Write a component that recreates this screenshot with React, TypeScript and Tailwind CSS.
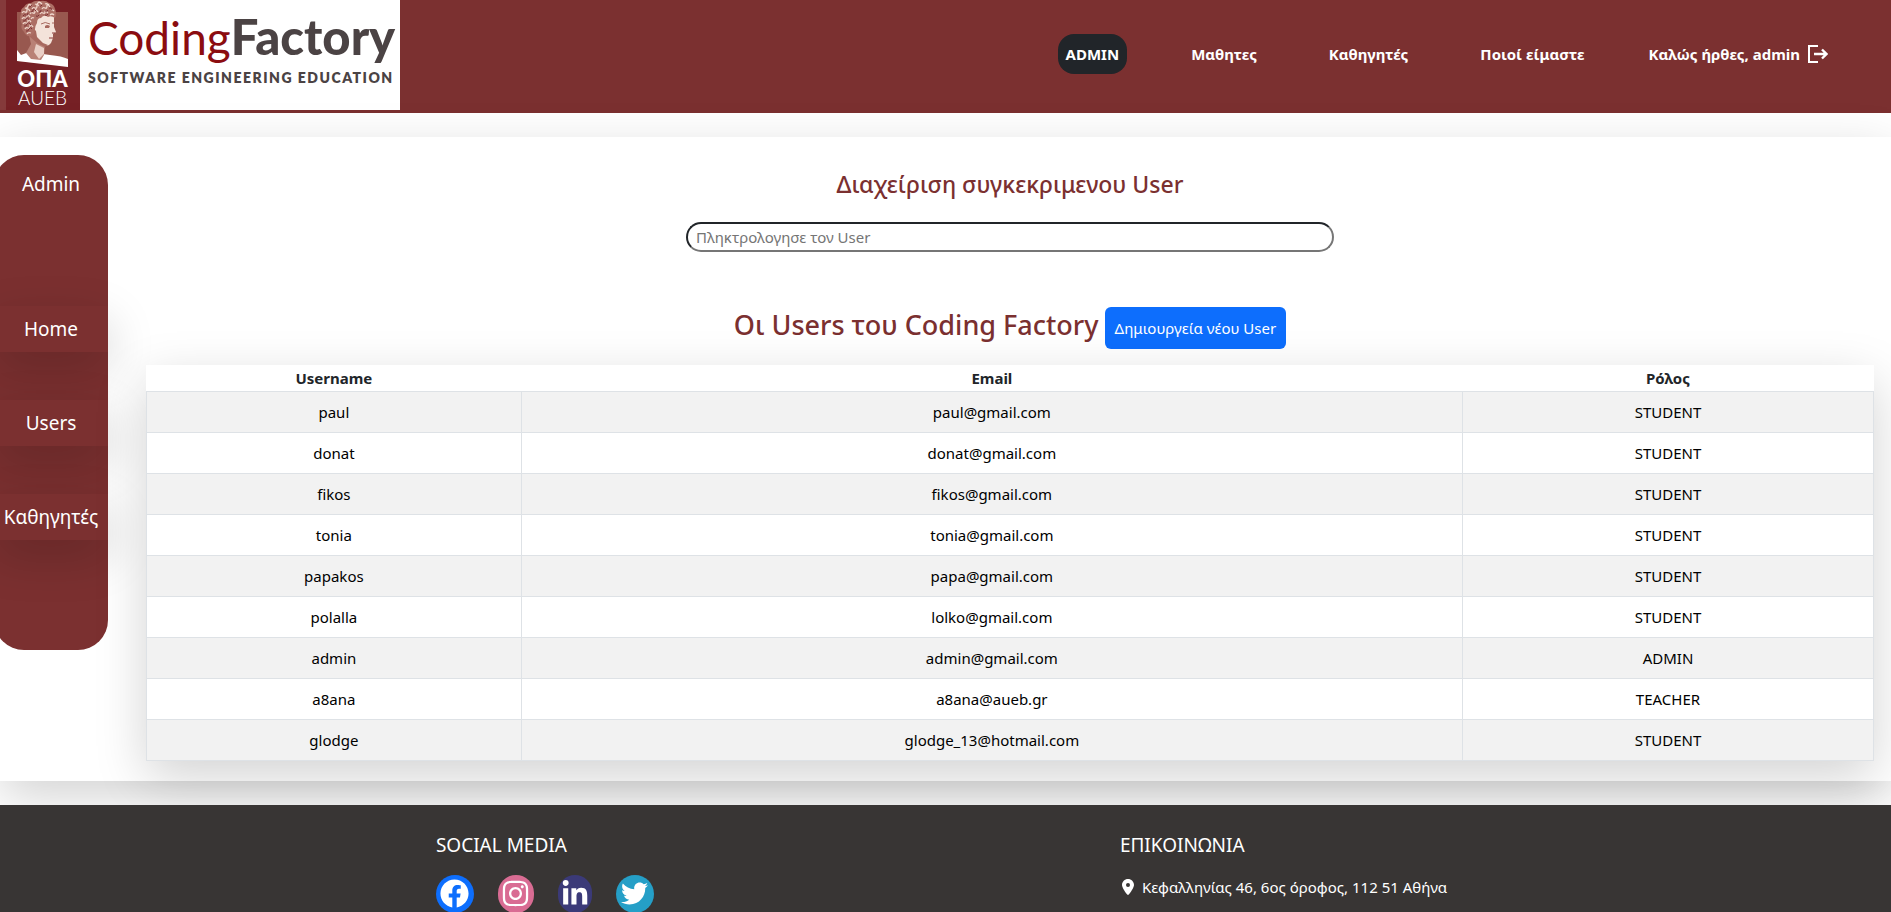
import type { ReactNode } from 'react';
import { FaFacebook, FaInstagram, FaLinkedinIn, FaTwitter } from 'react-icons/fa';
import { FaLocationDot } from 'react-icons/fa6';

type User = { username: string; email: string; role: string };

const users: User[] = [
  { username: 'paul', email: 'paul@gmail.com', role: 'STUDENT' },
  { username: 'donat', email: 'donat@gmail.com', role: 'STUDENT' },
  { username: 'fikos', email: 'fikos@gmail.com', role: 'STUDENT' },
  { username: 'tonia', email: 'tonia@gmail.com', role: 'STUDENT' },
  { username: 'papakos', email: 'papa@gmail.com', role: 'STUDENT' },
  { username: 'polalla', email: 'lolko@gmail.com', role: 'STUDENT' },
  { username: 'admin', email: 'admin@gmail.com', role: 'ADMIN' },
  { username: 'a8ana', email: 'a8ana@aueb.gr', role: 'TEACHER' },
  { username: 'glodge', email: 'glodge_13@hotmail.com', role: 'STUDENT' },
];

function Bust() {
  return (
    <svg viewBox="0 0 52 67" className="block h-[67px] w-[52px]" aria-hidden="true">
      <path d="M0 12H51V66L0 61Z" fill="#98584f" />
      <path d="M0 50L4 55L12 52L26 54L33 55Q45 56 51 59V67L0 61Z" fill="#fff" />
      <path d="M12 35L14 44L9 53L14 59L24 60L27 55L28 46L20 38Z" fill="#b98176" />
      <path d="M19 44L27 48L27 54L22 59L17 52Z" fill="#e9cfc6" />
      <path d="M17 20Q20 15 29 15L37 16L37 23L37 27L39 32L36 34L36 38L34 43Q32 46 29 46L20 41L13 36L12 28Z" fill="#f4e3da" />
      <path d="M15 27L19 31L20 37L26 43L31 45L28 47L20 43L12 36L11 30Z" fill="#a8695f" />
      <path d="M28 26Q30 24 33 26L32 28L28 28Z" fill="#a8695f" />
      <path d="M24 24Q28 21 33 24M35 23L37 23" fill="none" stroke="#a8695f" strokeWidth="1" />
      <path d="M32 38H36M35 33H38" fill="none" stroke="#8a3a38" strokeWidth="1" />
      <path
        d="M4 14Q3 9 7 7Q9 3 14 3Q18 0 23 1Q29 0 32 3Q37 4 38 9Q40 13 38 18Q34 15 31 17Q27 14 24 18Q20 18 20 23Q18 26 18 29Q18 34 14 36Q9 37 7 32Q3 28 5 24Q2 19 4 14Z"
        fill="#ad6f65"
      />
      <path
        d="M5 13q1-2 3-1t2-2t3 1M15 9q1-2 3-1t2-2t3 1M25 9q1-2 3-1t2-2t3 1M34 10q1-1 3 1M8 8q2 1 3-2t4 0M18 4q2 1 3-1t4 1M28 4q2-1 4 1M13 14q1-2 3-1t2-2t3 1M23 14q1-2 3-1t2-1t3 1M33 15q2-2 4 0M5 19q1-2 3-1t2-2t3 1M14 19q1-2 3-1M6 24q1-2 3-1t2-2t3 1M8 29q1-2 3-1t2-2t3 1M10 34q1-2 4-1"
        fill="none"
        stroke="#f0d8ce"
        strokeWidth="1.3"
      />
      <path
        d="M6 16q1-2 3-1t2-2M14 12q2 0 2-2t3 1M22 12q2 1 2-2M28 11q2 1 3-1M12 7q2 0 3-2M22 6q2 1 3-1M32 8q2-1 3 2M19 16q2 1 3-1M28 15q2 1 3-1M6 21q2 1 3-2t3 1M7 26q2 1 3-2t4 1M9 31q2 1 3-2t3 0"
        fill="none"
        stroke="#7c2f32"
        strokeWidth="1"
      />
    </svg>
  );
}

function Logo() {
  return (
    <a href="#home" className="flex h-[110px] w-[400px] shrink-0 bg-white">
      <span className="flex w-20 shrink-0 flex-col items-center border-l-6 border-[#853a3b] bg-[#762025] pr-px text-white">
        <Bust />
        <span className="mt-0.5 font-['Lato'] text-[22px] leading-5 font-black">ΟΠΑ</span>
        <span className="font-['Lato'] text-[19px] leading-[18px] font-light">AUEB</span>
      </span>
      <span className="flex flex-col pt-[7px] pl-2 font-['Lato'] whitespace-nowrap text-[#4b4344]">
        <span className="text-[49px] leading-[58px] font-black">
          <span className="text-[46px] font-normal text-[#8b0c10]">Coding</span>Factory
        </span>
        <span className="text-[14px] leading-[22px] font-extrabold tracking-[1.5px]">SOFTWARE ENGINEERING EDUCATION</span>
      </span>
    </a>
  );
}

function NavLink({ children }: { children: ReactNode }) {
  return (
    <a href="#nav" className="px-2 py-2">
      {children}
    </a>
  );
}

function ExitIcon() {
  return (
    <svg viewBox="0 0 20 18" className="h-[18px] w-5" fill="none" stroke="currentColor" strokeWidth="2" aria-hidden="true">
      <path d="M10 1H1V17H10" />
      <path d="M6 9H18M14 4.5L18.5 9L14 13.5" strokeWidth="2.4" />
    </svg>
  );
}

function SideLink({ children }: { children: ReactNode }) {
  return (
    <a
      href="#side"
      className="block bg-[#7b3030] py-2 text-center leading-[30px] shadow-[0_16px_48px_rgba(0,0,0,0.175)]"
    >
      {children}
    </a>
  );
}

function Social({ label, className, children }: { label: string; className: string; children: ReactNode }) {
  return (
    <a href="#social" aria-label={label} className={`flex h-[38px] items-center justify-center rounded-full text-white ${className}`}>
      {children}
    </a>
  );
}

export default function App() {
  return (
    <div className="flex min-h-screen flex-col bg-white font-['Noto_Sans',sans-serif] text-[15px] leading-6 text-[#212529]">
      <header className="flex h-[113px] items-start justify-between bg-[#7b3030]">
        <Logo />
        <nav className="flex items-center gap-12 self-stretch pr-[55px] pb-1.5 font-bold text-white">
          <div className="flex items-center gap-14">
            <a href="#admin" className="rounded-2xl bg-[#212529] px-2 py-2">
              ADMIN
            </a>
            <NavLink>Μαθητες</NavLink>
            <NavLink>Καθηγητές</NavLink>
            <NavLink>Ποιοί είμαστε</NavLink>
          </div>
          <a href="#logout" className="flex items-center gap-2 px-2 py-2">
            Καλώς ήρθες, admin
            <ExitIcon />
          </a>
        </nav>
      </header>

      <main className="my-6 flex items-start bg-white pr-[17px] shadow-[0_16px_48px_rgba(0,0,0,0.175)]">
        <aside className="mt-[18px] -ml-1.5 w-[114px] shrink-0 rounded-[30px] bg-[#7b3030] pt-3.5 pb-[110px] text-[19px] text-white">
          <h2 className="mb-[107px] text-center leading-[30px]">Admin</h2>
          <nav className="flex flex-col gap-12">
            <SideLink>Home</SideLink>
            <SideLink>Users</SideLink>
            <SideLink>Καθηγητές</SideLink>
          </nav>
        </aside>

        <section className="ml-[38px] flex min-w-0 grow flex-col items-center pt-[31px] pb-5">
          <label htmlFor="user-search" className="text-[23px] leading-8 font-medium text-[#7b3030]">
            Διαχείριση συγκεκριμενου User
          </label>
          <input
            id="user-search"
            type="text"
            placeholder="Πληκτρολογησε τον User"
            className="mt-[22px] h-[30px] w-3/8 rounded-2xl border-2 border-t-[#212529] border-r-[#767676] border-b-[#767676] border-l-[#212529] bg-white px-2 placeholder:text-[#757575]"
          />
          <div className="mt-[55px] flex items-start gap-1.5">
            <h1 className="text-[27px] leading-9 font-medium text-[#7b3030]">Οι Users του Coding Factory</h1>
            <button type="button" className="rounded-md bg-[#0d6efd] px-2.5 py-[9px] text-white">
              Δημιουργεία νέου User
            </button>
          </div>
          <table className="mt-4 w-full table-fixed border-collapse bg-white text-center shadow-[0_16px_48px_rgba(0,0,0,0.175)]">
            <colgroup>
              <col className="w-[21.7%]" />
              <col className="w-[54.5%]" />
              <col className="w-[23.8%]" />
            </colgroup>
            <thead>
              <tr className="h-[26px]">
                <th className="font-bold">Username</th>
                <th className="font-bold">Email</th>
                <th className="font-bold">Ρόλος</th>
              </tr>
            </thead>
            <tbody className="text-black">
              {users.map((u) => (
                <tr key={u.username} className="odd:bg-[#f2f2f2]">
                  <td className="border border-[#dee2e6] p-2">{u.username}</td>
                  <td className="border border-[#dee2e6] p-2">{u.email}</td>
                  <td className="border border-[#dee2e6] p-2">{u.role}</td>
                </tr>
              ))}
            </tbody>
          </table>
        </section>
      </main>

      <footer className="relative grid grow grid-cols-[684fr_771fr] overflow-hidden bg-[#383534] pt-6 pl-[23.05%] text-white">
        <section>
          <h2 className="text-[19px] leading-8">SOCIAL MEDIA</h2>
          <div className="mt-3.5 flex h-[35px] gap-6">
            <Social label="Facebook" className="w-[38px] bg-[#0d6efd]">
              <FaFacebook size={29} />
            </Social>
            <Social label="Instagram" className="w-9 bg-[#d96c93]">
              <FaInstagram size={29} />
            </Social>
            <Social label="LinkedIn" className="w-[34px] bg-[#3b3a78]">
              <FaLinkedinIn size={28} />
            </Social>
            <Social label="Twitter" className="w-[38px] bg-[#259fc7]">
              <FaTwitter size={27} />
            </Social>
          </div>
        </section>
        <section>
          <h2 className="text-[19px] leading-8">ΕΠΙΚΟΙΝΩΝΙΑ</h2>
          <p className="mt-3.5 flex items-center gap-1.5">
            <FaLocationDot size={16} />
            Κεφαλληνίας 46, 6ος όροφος, 112 51 Αθήνα
          </p>
        </section>
      </footer>
    </div>
  );
}
